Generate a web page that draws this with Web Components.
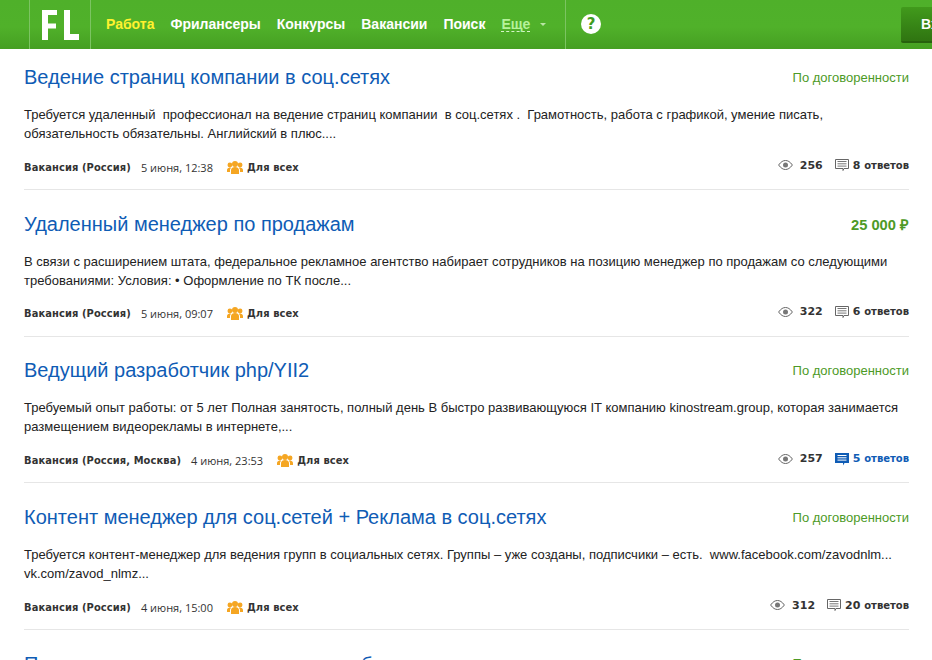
<!DOCTYPE html>
<html lang="ru">
<head>
<meta charset="utf-8">
<title>FL</title>
<style>
html, body { margin: 0; padding: 0; height: 100%; overflow: hidden; background: #fff; }
body { font-family: "Liberation Sans", Arial, sans-serif; }
</style>
</head>
<body>
<fl-header></fl-header>
<fl-list>
    <fl-job title-text="Ведение страниц компании в соц.сетях" price="По договоренности"
        place="Вакансия (Россия)" date="5 июня, 12:38" views="256" count="8" word="ответов">
        Требуется удаленный&nbsp; профессионал на ведение страниц компании&nbsp; в соц.сетях .&nbsp; Грамотность, работа с графикой, умение писать, обязательность обязательны. Английский в плюс....
    </fl-job>
    <fl-job title-text="Удаленный менеджер по продажам" price="25 000 ₽" money
        place="Вакансия (Россия)" date="5 июня, 09:07" views="322" count="6" word="ответов">
        В связи с расширением штата, федеральное рекламное агентство набирает сотрудников на позицию менеджер по продажам со следующими требованиями: Условия: • Оформление по ТК после...
    </fl-job>
    <fl-job title-text="Ведущий разработчик php/YII2" price="По договоренности"
        place="Вакансия (Россия, Москва)" date="4 июня, 23:53" views="257" count="5" word="ответов" answered>
        Требуемый опыт работы: от 5 лет Полная занятость, полный день В быстро развивающуюся IT компанию kinostream.group, которая занимается размещением видеорекламы в интернете,...
    </fl-job>
    <fl-job title-text="Контент менеджер для соц.сетей + Реклама в соц.сетях" price="По договоренности"
        place="Вакансия (Россия)" date="4 июня, 15:00" views="312" count="20" word="ответов">
        Требуется контент-менеджер для ведения групп в социальных сетях. Группы – уже созданы, подписчики – есть.&nbsp; www.facebook.com/zavodnlm... vk.com/zavod_nlmz...
    </fl-job>
    <fl-job title-text="Продавец-консультант в магазины обуви" price="По договоренности"
        place="Вакансия (Россия)" date="4 июня, 11:20" views="198" count="3" word="ответа">
        Требуется продавец-консультант.
    </fl-job>
</fl-list>
<script>
(function() {
    "use strict";

    const headerTemplate = `
        <style>
            :host { display: flex; height: 49px; padding-left: 29px; overflow: hidden;
                background: linear-gradient(#4fb02a, #50b12a 55%, #459f22);
                font: bold 14px "Liberation Sans", Arial, sans-serif; color: #fff; }
            .logo { width: 60px; flex: none; display: flex; align-items: center; justify-content: center;
                border-left: 1px solid #7cc462; border-right: 1px solid #7cc462; }
            .logo svg { display: block; margin-left: 1px; }
            nav { display: flex; align-items: center; gap: 16px; padding: 0 0 1px 15px; width: 475px; flex: none;
                box-sizing: border-box; border-right: 1px solid #7cc462; }
            .on { color: #fff22e; }
            .more { color: #b6f29a; border-bottom: 1px dashed #d6f5c8; line-height: 14px; margin-right: -7px; }
            .arrow { width: 0; height: 0; margin-left: 1px; border: 3px solid transparent; border-top: 3px solid #b9e5a5; border-bottom: 0; }
            .help { width: 20px; height: 20px; margin: 14px 0 0 15px; flex: none; border-radius: 50%; background: #fff;
                color: #3f9d1e; font: bold 15px/20px "DejaVu Sans", Verdana, sans-serif; text-align: center; }
            .cta { margin: 7px -40px 0 auto; width: 71px; height: 36px; flex: none; box-sizing: border-box;
                border-radius: 2px; background: linear-gradient(#419a1c, #2f7411); border-bottom: 2px solid #27610e;
                padding: 9px 0 0 20px; line-height: 16px; }
        </style>
        <div class="logo">
            <svg width="37" height="30" viewBox="0 0 37 30" fill="#fff">
                <path d="M0 0H15V5H6V13.500H14V18.500H6V30H0Z"/>
                <path d="M22 0H28V24H37V30H22Z"/>
            </svg>
        </div>
        <nav>
            <span class="on">Работа</span>
            <span>Фрилансеры</span>
            <span>Конкурсы</span>
            <span>Вакансии</span>
            <span>Поиск</span>
            <span class="more">Еще</span>
            <span class="arrow"></span>
        </nav>
        <span class="help">?</span>
        <span class="cta">Вход</span>
    `;

    class FlHeader extends HTMLElement {
        constructor() {
            super();
            this.attachShadow({mode: 'open'}).innerHTML = headerTemplate;
        }
    }

    const listTemplate = `
        <style>
            :host { display: block; padding: 0 23px 0 24px; }
        </style>
        <slot></slot>
    `;

    class FlList extends HTMLElement {
        constructor() {
            super();
            this.attachShadow({mode: 'open'}).innerHTML = listTemplate;
        }
    }

    const jobTemplate = `
        <style>
            :host { display: block; height: 146.670px; box-sizing: border-box; padding-top: 21.700px;
                border-bottom: 1px solid #e6e6e6; font-family: "Liberation Sans", Arial, sans-serif; color: #222; }
            :host(:first-child) { height: 141px; padding-top: 16px; }
            .top { display: flex; justify-content: space-between; align-items: center; height: 24px; }
            h2 { margin: 0; font-size: 20px; font-weight: normal; line-height: 24px; color: #0f5cb5; }
            .price { font-size: 13px; color: #4d9a26; }
            .price.money { font-size: 14.700px; font-weight: bold; }
            p { margin: 16px 0 0; height: 38px; font-size: 13px; line-height: 19px; color: #222; }
            .meta { display: flex; align-items: center; height: 16px; margin-top: 16.300px;
                font: 11px "DejaVu Sans", Verdana, sans-serif; color: #333; }
            b { font-weight: bold; }
            .narrow { font-family: "DejaVu Sans Condensed", "DejaVu Sans", sans-serif; letter-spacing: .1px; }
            .date { margin-left: 10px; font: 11px "Open Sans", Tahoma, sans-serif; }
            .for { display: flex; align-items: center; gap: 4px; margin-left: 14px; }
            .stats { margin-left: auto; display: flex; align-items: center; margin-top: -4px; }
            .views { margin: 0 12px 0 7px; }
            .answers { display: flex; align-items: center; gap: 3px; }
            .word { font-size: 10px; }
            :host([answered]) .answers { color: #0f5cb5; }
            svg { display: block; flex: none; }
        </style>
        <div class="top">
            <h2 id="title"></h2>
            <span class="price" id="price"></span>
        </div>
        <p><slot></slot></p>
        <div class="meta">
            <b class="narrow" id="place"></b>
            <span class="date" id="date"></span>
            <span class="for">
                <svg width="16" height="13" viewBox="0 0 16 13" fill="#f5a623">
                    <circle cx="8" cy="3" r="3"/><circle cx="2.900" cy="4" r="2.400"/><circle cx="13.100" cy="4" r="2.400"/>
                    <path d="M4 13V9c0-2 2-3 4-3s4 1 4 3v4zM0 11V9c0-1.500 1.500-2.500 3-2.500.5 0 1 0 1 .5-.7.500-1 1.200-1 2v2zM16 11V9c0-1.500-1.500-2.500-3-2.500-.5 0-1 0-1 .5.700.500 1 1.200 1 2v2z"/>
                </svg>
                <b class="narrow">Для всех</b>
            </span>
            <span class="stats">
                <svg width="15" height="10" viewBox="0 0 15 10" fill="none" stroke="#666">
                    <path d="M.6 5C3 1.700 5.200.5 7.500.5S12 1.700 14.400 5C12 8.300 9.800 9.500 7.500 9.500S3 8.300.6 5z"/>
                    <circle cx="7.500" cy="5" r="2.500" fill="#777" stroke="none"/>
                </svg>
                <b class="views" id="views"></b>
                <span class="answers">
                    <svg id="bubble" width="15" height="14" viewBox="0 0 15 14"></svg>
                    <b><span id="count"></span> <span class="word" id="word"></span></b>
                </span>
            </span>
        </div>
    `;

    class FlJob extends HTMLElement {
        constructor() {
            super();
            this.attachShadow({mode: 'open'}).innerHTML = jobTemplate;
        }

        connectedCallback() {
            const root = this.shadowRoot;
            ['title', 'price', 'place', 'date', 'views', 'count', 'word'].forEach(name => {
                const attr = name === 'title' ? 'title-text' : name;
                root.getElementById(name).textContent = this.getAttribute(attr);
            });
            if (this.hasAttribute('money')) {
                root.getElementById('price').classList.add('money');
            }
            // The answered state has a filled blue bubble, the others an outline.
            const bubble = root.getElementById('bubble');
            if (this.hasAttribute('answered')) {
                bubble.innerHTML = '<path d="M0 1h14v10H9.500L8 13.500V11H0z" fill="#0f5cb5"/>' +
                    '<path d="M2.500 3.500h9M2.500 5.800h9M2.500 8.100h9" stroke="#fff"/>';
            } else {
                bubble.innerHTML = '<path d="M.5 1.500h13v9H9L8 12.500v-2H.5z" fill="none" stroke="#666"/>' +
                    '<path d="M2.500 3.500h9M2.500 5.800h9M2.500 8.100h9" stroke="#777"/>';
            }
        }
    }

    window.customElements.define('fl-header', FlHeader);
    window.customElements.define('fl-list', FlList);
    window.customElements.define('fl-job', FlJob);
})();
</script>
</body>
</html>
